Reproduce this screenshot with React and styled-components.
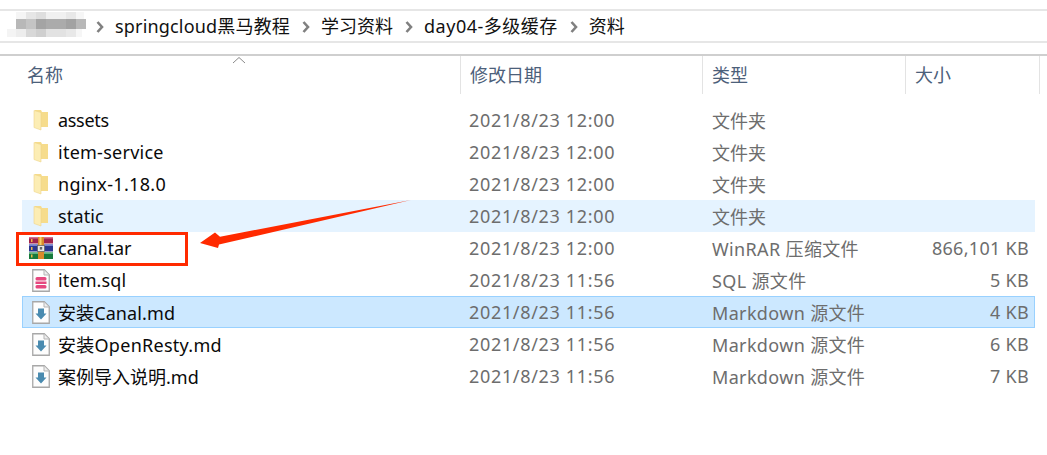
import React from "react";
import styled, { createGlobalStyle } from "styled-components";

const Global = createGlobalStyle`
  html, body { margin: 0; padding: 0; background: #fff; }
  body { font-family: "Noto Sans", "Noto Sans CJK SC", sans-serif; font-size: 18px; }
`;

const Page = styled.div`
  position: relative;
  width: 1047px;
  height: 455px;
  overflow: hidden;
  background: #fff;
`;

const Breadcrumb = styled.nav`
  display: flex;
  align-items: center;
  height: 30px;
  margin-top: 9px;
  border-top: 2px solid #e6e6e6;
  border-bottom: 2px solid #e6e6e6;
  color: #111;
`;

const Mosaic = styled.svg`
  width: 90px;
  height: 28px;
  flex: none;
  margin-right: 5px;
`;

const Crumb = styled.span`
  white-space: nowrap;
  line-height: 30px;
  letter-spacing: ${(p) => p.$spacing || "0"};
`;

const Chevron = styled.svg`
  width: 8px;
  height: 12px;
  flex: none;
  margin: 1px ${(p) => p.$right || "11px"} 0 ${(p) => p.$left || "12px"};
`;

const Header = styled.div`
  display: grid;
  grid-template-columns: 460px 242px 203px 135px;
  height: 40px;
  margin-top: 11px;
  border-top: 2px solid #cfcfcf;
  position: relative;
`;

const HeaderCell = styled.div`
  display: flex;
  align-items: center;
  height: 38px;
  padding-left: ${(p) => p.$pad || "9px"};
  border-left: ${(p) => (p.$first ? "none" : "1px solid #e3e3e3")};
  border-right: ${(p) => (p.$last ? "1px solid #e3e3e3" : "none")};
  color: #4c607a;
  line-height: 38px;
`;

const SortCaret = styled.svg`
  position: absolute;
  left: 232px;
  top: 0;
  width: 14px;
  height: 8px;
`;

const List = styled.div`
  display: flex;
  flex-direction: column;
  margin: 8px 12px 0 22px;
`;

const Row = styled.div`
  display: grid;
  grid-template-columns: 438px 242px 203px 130px;
  align-items: center;
  box-sizing: border-box;
  height: 32px;
  border: 1px solid ${(p) => (p.$state === "selected" ? "#99d1ff" : "transparent")};
  background: ${(p) =>
    p.$state === "selected" ? "#cce8ff" : p.$state === "hover" ? "#e5f3ff" : "transparent"};
`;

const NameCell = styled.div`
  display: flex;
  align-items: center;
  color: #0a0a0a;
  white-space: nowrap;
`;

const NameText = styled.span`
  letter-spacing: ${(p) => p.$spacing || "0"};
`;

const IconSlot = styled.span`
  display: flex;
  justify-content: center;
  align-items: center;
  width: 24px;
  height: 24px;
  margin: 0 5px 0 6px;
`;

const DateCell = styled.div`
  color: #6d6d6d;
  white-space: nowrap;
  padding-left: 8px;
  letter-spacing: 0.67px;
`;

const TypeCell = styled.div`
  color: #6d6d6d;
  white-space: nowrap;
  padding-left: 9px;
  letter-spacing: ${(p) => (p.$latin ? "0.35px" : "0")};
`;

const SizeCell = styled.div`
  color: #6d6d6d;
  text-align: right;
  padding-right: 7px;
  white-space: nowrap;
  letter-spacing: 0.3px;
`;

const Callout = styled.div`
  position: absolute;
  left: 16px;
  top: 232px;
  width: 172px;
  height: 34px;
  box-sizing: border-box;
  border: 3px solid #ff2a00;
`;

const Arrow = styled.svg`
  position: absolute;
  left: 195px;
  top: 195px;
  width: 220px;
  height: 60px;
`;

const FolderIcon = () => (
  <svg width="16" height="22" viewBox="0 0 16 22">
    <path d="M2 1h6l1 2h6v15H2z" fill="#f6dc8c" />
    <path d="M1 1.5 L8 3.5 V21 L1 18.5z" fill="#fcedb4" stroke="#eed58a" strokeWidth="0.6" />
  </svg>
);

const RarIcon = () => (
  <svg width="24" height="22" viewBox="0 0 24 22">
    <rect x="0" y="0" width="24" height="6.5" fill="#a0234c" />
    <rect x="0" y="7.5" width="24" height="7" fill="#2a3690" />
    <rect x="0" y="15.5" width="24" height="6.5" fill="#177a3c" />
    <rect x="0" y="0" width="24" height="1.5" fill="#d4708f" />
    <rect x="0" y="7.5" width="24" height="1.5" fill="#7480cf" />
    <rect x="0" y="15.5" width="24" height="1.5" fill="#62b480" />
    <rect x="2" y="2" width="1.5" height="3" fill="#eeb648" />
    <rect x="2" y="10" width="1.5" height="3" fill="#eeb648" />
    <rect x="2" y="17.5" width="1.5" height="3" fill="#eeb648" />
    <rect x="9" y="0" width="6" height="22" fill="#d98a2b" />
    <rect x="10.5" y="0" width="2" height="9" fill="#f5cd6a" />
    <rect x="8.5" y="8.5" width="7" height="6" fill="#e9e9e9" stroke="#666" strokeWidth="0.8" />
    <rect x="10.8" y="10" width="2.4" height="2.6" fill="#666" />
  </svg>
);

const DocShell = ({ children }) => (
  <svg width="18" height="23" viewBox="0 0 18 23">
    <path d="M.75.75h11.5l5 5v16.5H.75z" fill="#fdfdfd" stroke="#a8a8a8" strokeWidth="1.3" />
    <path d="M12 1v5h5" fill="#eee" stroke="#b5b5b5" />
    {children}
  </svg>
);

const SqlIcon = () => (
  <DocShell>
    <rect x="3.5" y="8" width="11" height="3.5" rx="1.5" fill="#e6487f" />
    <rect x="3.5" y="12.5" width="11" height="2.5" fill="#e6487f" />
    <rect x="3.5" y="16" width="11" height="3.5" rx="1.5" fill="#e6487f" />
  </DocShell>
);

const MdIcon = () => (
  <DocShell>
    <path d="M6 7.5h6v5h2.5L9 18.5 3.5 12.5H6z" fill="#4a8bb0" />
  </DocShell>
);

const icons = { folder: FolderIcon, rar: RarIcon, sql: SqlIcon, md: MdIcon };

const rows = [
  { name: "assets", spacing: "-0.3px", date: "2021/8/23 12:00", type: "文件夹", icon: "folder" },
  { name: "item-service", spacing: "0.25px", date: "2021/8/23 12:00", type: "文件夹", icon: "folder" },
  { name: "nginx-1.18.0", spacing: "0.33px", date: "2021/8/23 12:00", type: "文件夹", icon: "folder" },
  { name: "static", spacing: "0.15px", date: "2021/8/23 12:00", type: "文件夹", icon: "folder", state: "hover" },
  { name: "canal.tar", date: "2021/8/23 12:00", type: "WinRAR 压缩文件", size: "866,101 KB", icon: "rar" },
  { name: "item.sql", spacing: "0.12px", date: "2021/8/23 11:56", type: "SQL 源文件", size: "5 KB", icon: "sql" },
  { name: "安装Canal.md", spacing: "0.1px", date: "2021/8/23 11:56", type: "Markdown 源文件", size: "4 KB", icon: "md", state: "selected" },
  { name: "安装OpenResty.md", spacing: "0.27px", date: "2021/8/23 11:56", type: "Markdown 源文件", size: "6 KB", icon: "md" },
  { name: "案例导入说明.md", date: "2021/8/23 11:56", type: "Markdown 源文件", size: "7 KB", icon: "md" },
];

const mosaic = [
  [16, 12, 10, 7, "#f5f5f5"], [26, 12, 10, 7, "#e6e6e6"], [36, 12, 10, 7, "#dedede"], [46, 12, 20, 7, "#f0f0f0"], [66, 12, 10, 7, "#e8e8e8"], [76, 12, 8, 7, "#f6f6f6"],
  [7, 19, 9, 10, "#ffffff"], [16, 19, 10, 10, "#b8b8b8"], [26, 19, 10, 10, "#c4c4c4"], [36, 19, 10, 10, "#a4a4a4"], [46, 19, 20, 10, "#ababab"], [66, 19, 10, 10, "#a2a2a2"], [76, 19, 10, 10, "#b8b8b8"],
  [7, 29, 9, 8, "#f4f4f4"], [16, 29, 10, 8, "#ededed"], [26, 29, 10, 8, "#d8d8d8"], [36, 29, 10, 8, "#cfcfcf"], [46, 29, 20, 8, "#e2e2e2"], [66, 29, 10, 8, "#e8e8e8"], [76, 29, 6, 8, "#f6f6f6"],
];

const Sep = ({ left, right }) => (
  <Chevron $left={left} $right={right} viewBox="0 0 8 12">
    <path d="M1.5 1 L6 6 L1.5 11" fill="none" stroke="#808080" strokeWidth="2.6" />
  </Chevron>
);

export default function App() {
  return (
    <Page>
      <Global />
      <Breadcrumb>
        <Mosaic viewBox="0 12 90 28">
          {mosaic.map(([x, y, w, h, c], i) => (
            <rect key={i} x={x} y={y} width={w} height={h} fill={c} />
          ))}
        </Mosaic>
        <Sep left="1px" right="11px" />
        <Crumb $spacing="0.18px">springcloud黑马教程</Crumb>
        <Sep />
        <Crumb>学习资料</Crumb>
        <Sep />
        <Crumb $spacing="0.5px">day04-多级缓存</Crumb>
        <Sep />
        <Crumb>资料</Crumb>
      </Breadcrumb>
      <Header>
        <HeaderCell $first $pad="27px">名称</HeaderCell>
        <HeaderCell>修改日期</HeaderCell>
        <HeaderCell>类型</HeaderCell>
        <HeaderCell $last>大小</HeaderCell>
        <SortCaret viewBox="0 0 14 8">
          <path d="M1 7 L7 1.5 L13 7" fill="none" stroke="#8a8a8a" strokeWidth="1" />
        </SortCaret>
      </Header>
      <List>
        {rows.map((r) => {
          const Icon = icons[r.icon];
          return (
            <Row key={r.name} $state={r.state}>
              <NameCell>
                <IconSlot><Icon /></IconSlot>
                <NameText $spacing={r.spacing}>{r.name}</NameText>
              </NameCell>
              <DateCell>{r.date}</DateCell>
              <TypeCell $latin={Boolean(r.size)}>{r.type}</TypeCell>
              <SizeCell>{r.size}</SizeCell>
            </Row>
          );
        })}
      </List>
      <Callout />
      <Arrow viewBox="195 195 220 60">
        <polygon points="411,200 220,236.7 215,232.5 200,243 218,248 219,244.5" fill="#ff2a00" />
      </Arrow>
    </Page>
  );
}
